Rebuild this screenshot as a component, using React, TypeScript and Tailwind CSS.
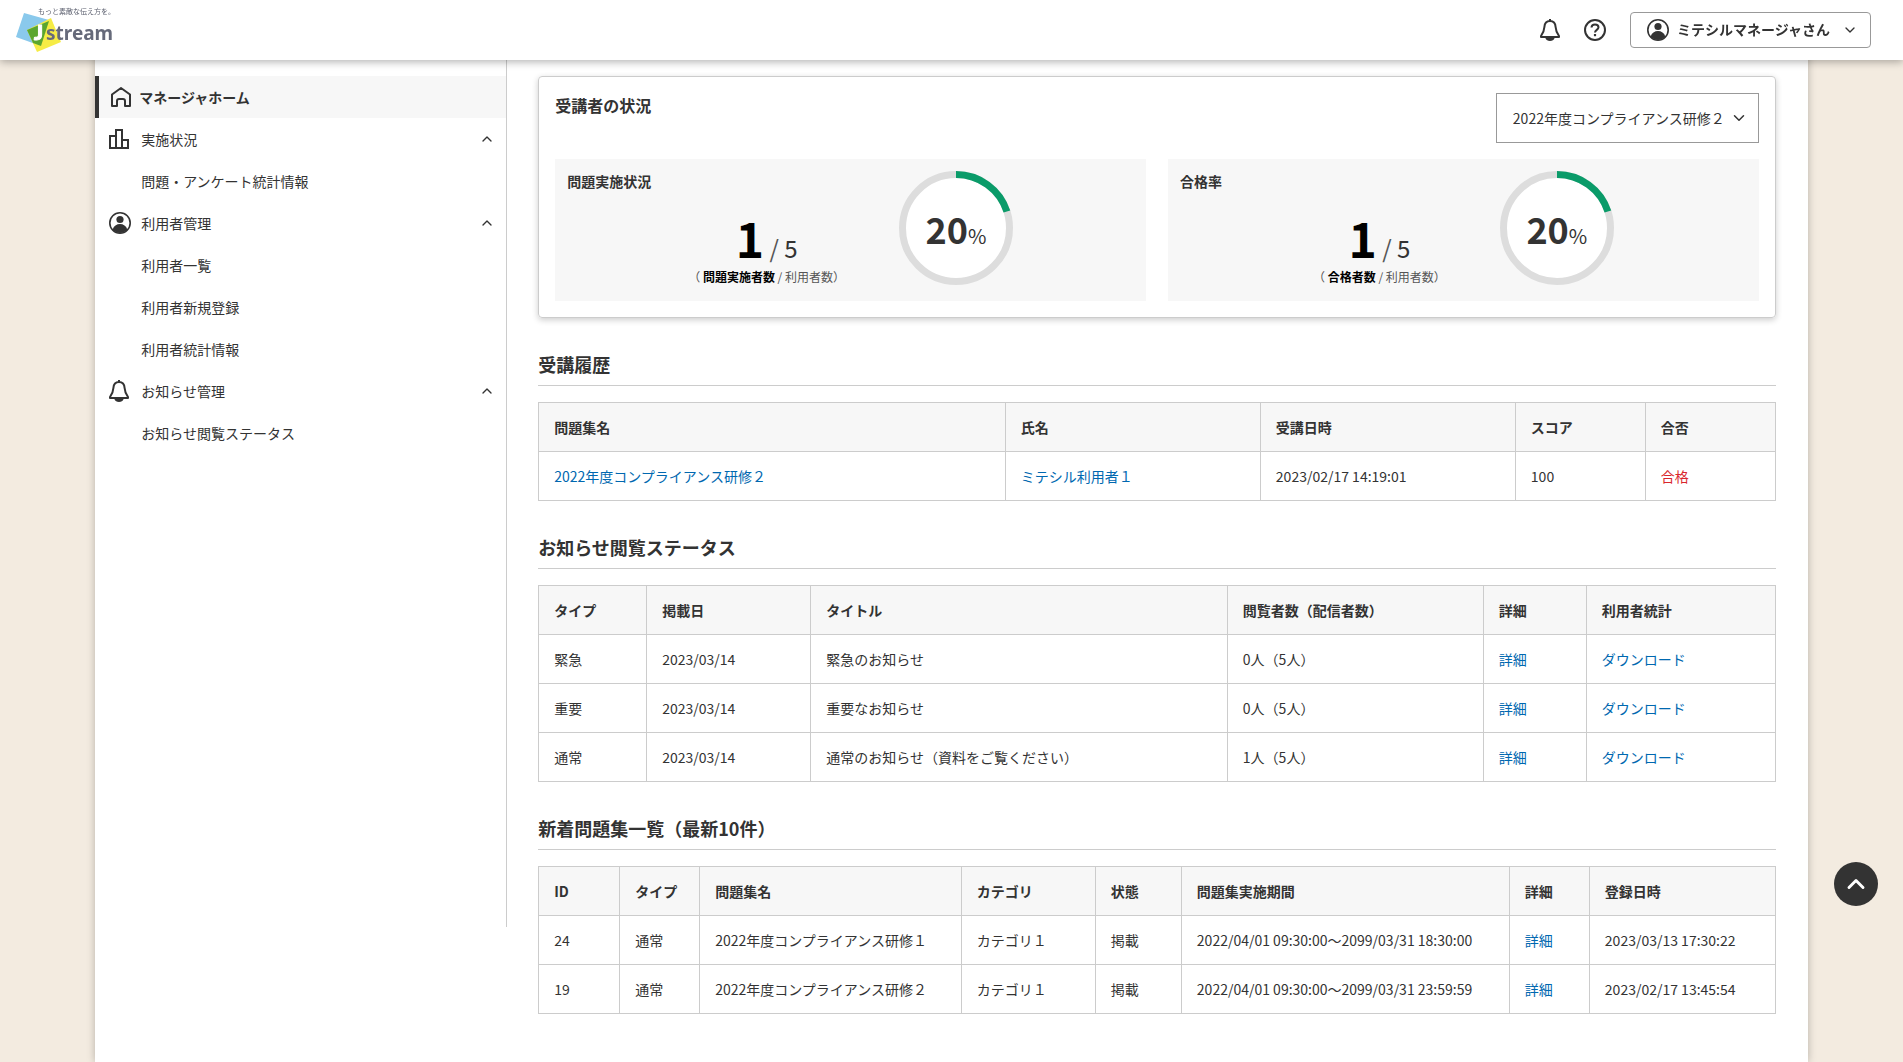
import type { ReactNode } from "react";
import { ChevronDown, ChevronUp } from "lucide-react";

type Column = { label: string; width?: string };

const historyColumns: Column[] = [
  { label: "問題集名" },
  { label: "氏名", width: "w-[255px]" },
  { label: "受講日時", width: "w-[255px]" },
  { label: "スコア", width: "w-[130px]" },
  { label: "合否", width: "w-[130px]" },
];

const noticeColumns: Column[] = [
  { label: "タイプ", width: "w-[108px]" },
  { label: "掲載日", width: "w-[164px]" },
  { label: "タイトル" },
  { label: "閲覧者数（配信者数）", width: "w-[256px]" },
  { label: "詳細", width: "w-[103px]" },
  { label: "利用者統計", width: "w-[189px]" },
];

const examColumns: Column[] = [
  { label: "ID", width: "w-[81px]" },
  { label: "タイプ", width: "w-[80px]" },
  { label: "問題集名" },
  { label: "カテゴリ", width: "w-[134px]" },
  { label: "状態", width: "w-[86px]" },
  { label: "問題集実施期間", width: "w-[328px]" },
  { label: "詳細", width: "w-[80px]" },
  { label: "登録日時", width: "w-[186px]" },
];

const notices = [
  { type: "緊急", date: "2023/03/14", title: "緊急のお知らせ", readers: "0人（5人）" },
  { type: "重要", date: "2023/03/14", title: "重要なお知らせ", readers: "0人（5人）" },
  { type: "通常", date: "2023/03/14", title: "通常のお知らせ（資料をご覧ください）", readers: "1人（5人）" },
];

const exams = [
  { id: 24, name: "2022年度コンプライアンス研修１", period: "2022/04/01 09:30:00～2099/03/31 18:30:00", created: "2023/03/13 17:30:22" },
  { id: 19, name: "2022年度コンプライアンス研修２", period: "2022/04/01 09:30:00～2099/03/31 23:59:59", created: "2023/02/17 13:45:54" },
];

const menu = [
  { label: "実施状況", icon: ChartIcon, items: ["問題・アンケート統計情報"] },
  { label: "利用者管理", icon: UserIcon, items: ["利用者一覧", "利用者新規登録", "利用者統計情報"] },
  { label: "お知らせ管理", icon: BellIcon, items: ["お知らせ閲覧ステータス"] },
];

function HomeIcon() {
  return (
    <svg className="size-[22px]" viewBox="0 0 22 22" fill="none" stroke="currentColor" strokeWidth="2" strokeLinejoin="round">
      <path d="M2 8.500 11 2l9 6.500V20h-5v-5a2 2 0 0 0-2-2h-4a2 2 0 0 0-2 2v5H2z" />
    </svg>
  );
}

function ChartIcon() {
  return (
    <svg className="size-[22px]" viewBox="0 0 22 22" fill="none" stroke="currentColor" strokeWidth="2">
      <path d="M1 8h6v12H1zM7 2h6v18H7zM13 12h6v8h-6z" />
    </svg>
  );
}

function UserIcon() {
  return (
    <svg className="size-[22px]" viewBox="0 0 22 22" fill="currentColor">
      <circle cx="11" cy="11" r="10.200" fill="none" stroke="currentColor" strokeWidth="1.600" />
      <circle cx="11" cy="7.500" r="3.600" />
      <path d="M3.700 17.500c1-3.600 4-5.500 7.300-5.500s6.300 1.900 7.300 5.500A9.800 9.800 0 0 1 11 21a9.800 9.800 0 0 1-7.300-3.500z" />
    </svg>
  );
}

function BellIcon() {
  return (
    <svg className="size-[22px]" viewBox="0 0 22 22" fill="none" stroke="currentColor" strokeWidth="2" strokeLinejoin="round">
      <path d="M10 0v2M10 2C6.300 2 4.600 4.700 4.400 8 4.200 12 3.200 14 1 17v1h18v-1C16.800 14 15.800 12 15.600 8 15.400 4.700 13.700 2 10 2z" />
      <path d="M6.500 19.200a3.600 2.200 0 0 0 7 0z" fill="currentColor" />
    </svg>
  );
}

function HelpIcon() {
  return (
    <svg className="size-[22px]" viewBox="0 0 22 22" fill="none" stroke="currentColor" strokeWidth="2">
      <circle cx="11" cy="11" r="10" />
      <path d="M7.500 8.500C7.600 6.500 9 5.500 11 5.500s3.500 1.100 3.500 2.800c0 2.500-3.500 2.600-3.500 5.200" />
      <path d="M11 15v2.200" strokeWidth="2.200" />
    </svg>
  );
}

function Logo() {
  return (
    <svg className="h-12 w-[100px]" viewBox="0 0 100 48" role="img" aria-label="Jstream">
      <path d="M8 7l25 7-8 26-25-9z" fill="#8ac9ec" />
      <path d="M35 12l10 24-24 10-10-22z" fill="#f6ec45" />
      <path d="M11 24l22-9-8 25-8-3z" fill="#5aa62f" />
      <text x="22" y="8" fontSize="7" fill="#5b5f6e">もっと素敵な伝え方を。</text>
      <text x="18" y="34" fontSize="21" fontWeight="900" fontFamily="Lato, sans-serif" fill="#fff" stroke="#fff">J</text>
      <text x="30" y="34" fontSize="19" fontWeight="700" fontFamily="Noto Sans, sans-serif" fill="#666a7a">stream</text>
    </svg>
  );
}

function Header() {
  return (
    <header className="fixed inset-x-0 top-0 z-10 flex h-[60px] items-center bg-white pr-8 pl-4 shadow-[0_2px_8px_rgba(0,0,0,0.3)]">
      <a href="#top">
        <Logo />
      </a>
      <div className="ml-auto flex items-center">
        <button type="button" aria-label="お知らせ" className="mr-[22px]">
          <BellIcon />
        </button>
        <button type="button" aria-label="ヘルプ" className="mr-6">
          <HelpIcon />
        </button>
        <button type="button" className="flex h-9 w-[241px] items-center rounded-sm border border-[#999] pr-3 pl-4 font-bold">
          <UserIcon />
          <span className="ml-2 pb-0.5">ミテシルマネージャさん</span>
          <ChevronDown className="ml-auto size-4" />
        </button>
      </div>
    </header>
  );
}

function Sidebar() {
  return (
    <nav className="box-content h-[851px] w-[24%] shrink-0 border-r border-[#ccc] pt-4">
      <a href="#home" className="flex h-[42px] items-center gap-[7px] border-l-4 border-[#333] bg-[#f7f7f7] pl-[11px] font-bold">
        <HomeIcon />
        マネージャホーム
      </a>
      {menu.map((group) => (
        <div key={group.label}>
          <button type="button" className="flex h-[42px] w-full items-center gap-[10px] pr-[11px] pl-[14px]">
            <group.icon />
            {group.label}
            <ChevronUp className="ml-auto size-4" />
          </button>
          {group.items.map((item) => (
            <a key={item} href="#menu" className="flex h-[42px] items-center pl-[46px]">
              {item}
            </a>
          ))}
        </div>
      ))}
    </nav>
  );
}

function Ring({ percent }: { percent: number }) {
  return (
    <div className="relative size-[114px] shrink-0">
      <svg className="size-full -rotate-90" viewBox="0 0 114 114" strokeWidth="7">
        <circle cx="57" cy="57" r="53.500" fill="#fff" stroke="#ddd" />
        <circle cx="57" cy="57" r="53.500" fill="none" stroke="#0a9b69" pathLength="100" strokeDasharray={`${percent} 100`} />
      </svg>
      <p className="absolute inset-0 flex items-center justify-center pt-0.5">
        <span>
          <b className="text-4xl">{percent}</b>
          <span className="text-xl">%</span>
        </span>
      </p>
    </div>
  );
}

function StatPanel({ title, unit, count, total }: { title: string; unit: string; count: number; total: number }) {
  return (
    <div className="flex-1 bg-[#f7f7f7] pb-4">
      <h3 className="h-3 px-3 pt-3 leading-5 font-bold">{title}</h3>
      <div className="flex items-start justify-center gap-[54px]">
        <div className="pt-[42px] text-center">
          <p className="text-2xl leading-6 text-[#555]">
            <b className="text-5xl leading-12 text-black">{count}</b> / <span className="text-[#333]">{total}</span>
          </p>
          <p className="mt-2 text-xs leading-4 text-[#555]">
            （ <b className="text-black">{unit}</b> / 利用者数）
          </p>
        </div>
        <Ring percent={(count / total) * 100} />
      </div>
    </div>
  );
}

function Section({ title, columns, children }: { title: string; columns: Column[]; children: ReactNode }) {
  return (
    <section>
      <h2 className="mt-8 mb-4 border-b border-[#ccc] pb-[7px] text-lg leading-7 font-bold">{title}</h2>
      <table className="w-full table-fixed border-collapse text-left leading-6 [&_td]:border [&_td]:border-[#ccc] [&_td]:px-[15px] [&_td]:py-3 [&_th]:border [&_th]:border-[#ccc] [&_th]:px-[15px] [&_th]:py-3">
        <thead className="bg-[#f7f7f7]">
          <tr>
            {columns.map((c) => (
              <th key={c.label} className={c.width}>{c.label}</th>
            ))}
          </tr>
        </thead>
        <tbody>{children}</tbody>
      </table>
    </section>
  );
}

function TextLink({ children }: { children: ReactNode }) {
  return <a href="#detail" className="text-[#0068b0]">{children}</a>;
}

export default function App() {
  return (
    <div id="top" className="min-h-screen bg-[#f3ebe0] font-['Noto_Sans_CJK_JP',sans-serif] text-sm text-[#333]">
      <Header />
      <div className="mx-auto flex min-h-screen w-[90%] bg-white pt-[60px] shadow-[0_0_8px_rgba(0,0,0,0.25)]">
        <Sidebar />
        <main className="min-w-0 flex-1 pt-4 pr-8 pl-[31px]">
          <div className="rounded-sm border border-[#ccc] p-4 shadow-[0_2px_6px_rgba(0,0,0,0.2)]">
            <div className="mb-4 flex items-start justify-between">
              <h2 className="text-base leading-6 font-bold">受講者の状況</h2>
              <div className="relative">
                <select aria-label="問題集" className="h-[50px] w-[263px] appearance-none border border-[#999] bg-white px-4">
                  <option>2022年度コンプライアンス研修２</option>
                </select>
                <ChevronDown className="pointer-events-none absolute top-4 right-[11px] size-[18px]" />
              </div>
            </div>
            <div className="flex gap-[22px]">
              <StatPanel title="問題実施状況" unit="問題実施者数" count={1} total={5} />
              <StatPanel title="合格率" unit="合格者数" count={1} total={5} />
            </div>
          </div>

          <Section title="受講履歴" columns={historyColumns}>
            <tr>
              <td><TextLink>2022年度コンプライアンス研修２</TextLink></td>
              <td><TextLink>ミテシル利用者１</TextLink></td>
              <td>2023/02/17 14:19:01</td>
              <td>100</td>
              <td className="text-[#d9262c]">合格</td>
            </tr>
          </Section>

          <Section title="お知らせ閲覧ステータス" columns={noticeColumns}>
            {notices.map((n) => (
              <tr key={n.type}>
                <td>{n.type}</td>
                <td>{n.date}</td>
                <td>{n.title}</td>
                <td>{n.readers}</td>
                <td><TextLink>詳細</TextLink></td>
                <td><TextLink>ダウンロード</TextLink></td>
              </tr>
            ))}
          </Section>

          <Section title="新着問題集一覧（最新10件）" columns={examColumns}>
            {exams.map((e) => (
              <tr key={e.id}>
                <td>{e.id}</td>
                <td>通常</td>
                <td>{e.name}</td>
                <td>カテゴリ１</td>
                <td>掲載</td>
                <td>{e.period}</td>
                <td><TextLink>詳細</TextLink></td>
                <td>{e.created}</td>
              </tr>
            ))}
          </Section>
        </main>
      </div>
      <a href="#top" aria-label="ページ上部へ" className="fixed right-[25px] bottom-[156px] flex size-11 items-center justify-center rounded-full bg-[#333] text-white">
        <ChevronUp className="size-7" strokeWidth={2.5} />
      </a>
    </div>
  );
}
